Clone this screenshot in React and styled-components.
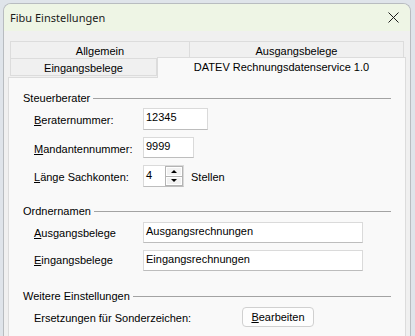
import React from "react";
import styled, { createGlobalStyle } from "styled-components";

const GlobalStyle = createGlobalStyle`
  html, body {
    margin: 0;
    padding: 0;
    height: 336px;
    overflow: hidden;
    background: #dfe4ea;
  }
  #root {
    height: 100%;
  }
`;

const Window = styled.div`
  margin: 3px 0 0 3px;
  width: 408px;
  height: 340px;
  box-sizing: border-box;
  border: 1px solid #b8bcc0;
  border-bottom: none;
  border-radius: 8px 8px 0 0;
  overflow: hidden;
  background: #f0f0f0;
  font-family: "Liberation Sans", Arial, sans-serif;
  font-size: 11px;
  color: #000;
`;

const TitleBar = styled.div`
  height: 26px;
  display: flex;
  align-items: center;
  justify-content: space-between;
  padding: 0 6px 1px 6px;
  background: #eef5e5;
`;

const Title = styled.span`
  font-family: "Noto Sans", "Open Sans", sans-serif;
  font-size: 11px;
  color: #1a1a1a;
`;

const CloseButton = styled.div`
  width: 11px;
  height: 11px;
  margin-right: 5px;
  display: flex;
`;

const TabArea = styled.div`
  padding: 10px 4px 0 4px;
`;

const TabRow = styled.div`
  display: flex;
  margin: ${(p) => (p.$front ? "0" : "0 2px")};
  position: relative;
`;

const Tab = styled.div`
  box-sizing: border-box;
  flex: ${(p) => (p.$width ? `0 0 ${p.$width}px` : "1 1 auto")};
  margin-left: ${(p) => (p.$indent ? "2px" : "0")};
  height: ${(p) => (p.$selected ? "21px" : "18px")};
  margin-top: ${(p) => (p.$selected ? "-2px" : p.$front ? "-1px" : "0")};
  margin-bottom: ${(p) => (p.$selected ? "-1px" : "0")};
  padding-top: 3px;
  line-height: 13px;
  text-align: center;
  background: ${(p) => (p.$selected ? "#f9f9f9" : "#f0f0f0")};
  border: 1px solid #dcdcdc;
  border-bottom: ${(p) => (p.$selected ? "none" : "1px solid #dcdcdc")};
  border-left-width: ${(p) => (p.$joined ? "0" : "1px")};
  position: relative;
  z-index: ${(p) => (p.$selected ? 2 : 1)};
  white-space: nowrap;
`;

const Panel = styled.div`
  box-sizing: border-box;
  height: 300px;
  background: #f9f9f9;
  border: 1px solid #dcdcdc;
  border-bottom: none;
  padding: 14px 14px 0 14px;
  position: relative;
  z-index: 1;
`;

const Group = styled.div`
  margin-top: ${(p) => p.$gap || 0}px;
`;

const GroupHeader = styled.div`
  display: flex;
  align-items: center;
  height: 13px;
  line-height: 13px;
  white-space: nowrap;
`;

const GroupLine = styled.div`
  flex: 1;
  height: 1px;
  margin: -1px 0 0 3px;
  background: #a3a3a3;
`;

const Rows = styled.div`
  display: flex;
  flex-direction: column;
  gap: 7px;
  margin: ${(p) => p.$top}px 0 0 11px;
`;

const Row = styled.div`
  display: flex;
  align-items: flex-start;
`;

const Label = styled.div`
  flex: 0 0 ${(p) => p.$width || 109}px;
  padding-top: ${(p) => p.$offset || 0}px;
  line-height: 13px;
  white-space: nowrap;
`;

const Key = styled.span`
  text-decoration: underline;
  text-underline-offset: 1px;
`;

const TextBox = styled.div`
  box-sizing: border-box;
  width: ${(p) => p.$width}px;
  height: ${(p) => p.$height || 21}px;
  background: #fff;
  border: 1px solid #dadada;
  border-bottom-color: #bdbdbd;
  padding: 0 0 ${(p) => p.$lift || 1}px 2px;
  display: flex;
  align-items: center;
  line-height: 13px;
`;

const SpinBox = styled.div`
  box-sizing: border-box;
  width: 41px;
  height: 22px;
  background: #fff;
  border: 1px solid #dadada;
  border-bottom-color: #bdbdbd;
  display: flex;
`;

const SpinValue = styled.div`
  flex: 1;
  padding: 0 0 2px 2px;
  display: flex;
  align-items: center;
`;

const SpinButtons = styled.div`
  box-sizing: border-box;
  width: 18px;
  border: 1px solid #b4b4b4;
  display: flex;
  flex-direction: column;
  background: #b4b4b4;
  gap: 1px;
`;

const SpinButton = styled.div`
  flex: 1;
  background: #f2f2f2;
  border: 1px solid #fff;
  display: flex;
  align-items: center;
  justify-content: center;
`;

const Arrow = styled.div`
  width: 0;
  height: 0;
  border-left: 3px solid transparent;
  border-right: 3px solid transparent;
  ${(p) =>
    p.$down ? "border-top: 3px solid #000;" : "border-bottom: 3px solid #000;"}
`;

const Unit = styled.div`
  margin-left: 7px;
  padding-top: 6px;
  line-height: 13px;
`;

const Button = styled.div`
  box-sizing: border-box;
  width: 72px;
  height: 20px;
  border: 1px solid #d0d0d0;
  border-radius: 4px;
  background: #fdfdfd;
  display: flex;
  align-items: center;
  justify-content: center;
  padding-bottom: 1px;
`;

export default function App() {
  return (
    <>
      <GlobalStyle />
      <Window>
        <TitleBar>
          <Title>Fibu Einstellungen</Title>
          <CloseButton>
            <svg width="11" height="11" viewBox="0 0 11 11">
              <path d="M0.5 0.5 L10.5 10.5 M10.5 0.5 L0.5 10.5" stroke="#1b1b1b" strokeWidth="1" />
            </svg>
          </CloseButton>
        </TitleBar>
        <TabArea>
          <TabRow>
            <Tab $width={180}>Allgemein</Tab>
            <Tab $joined>Ausgangsbelege</Tab>
          </TabRow>
          <TabRow $front>
            <Tab $front $indent $width={147}>Eingangsbelege</Tab>
            <Tab $front $selected>DATEV Rechnungsdatenservice 1.0</Tab>
          </TabRow>
          <Panel>
            <Group>
              <GroupHeader>
                Steuerberater
                <GroupLine />
              </GroupHeader>
              <Rows $top={3}>
                <Row>
                  <Label $offset={6}><Key>B</Key>eraternummer:</Label>
                  <TextBox $width={65} $height={22} $lift={3}>12345</TextBox>
                </Row>
                <Row>
                  <Label $offset={6}><Key>M</Key>andantennummer:</Label>
                  <TextBox $width={51} $lift={3}>9999</TextBox>
                </Row>
                <Row>
                  <Label $offset={6}><Key>L</Key>änge Sachkonten:</Label>
                  <SpinBox>
                    <SpinValue>4</SpinValue>
                    <SpinButtons>
                      <SpinButton><Arrow /></SpinButton>
                      <SpinButton><Arrow $down /></SpinButton>
                    </SpinButtons>
                  </SpinBox>
                  <Unit>Stellen</Unit>
                </Row>
              </Rows>
            </Group>
            <Group $gap={18}>
              <GroupHeader>
                Ordnernamen
                <GroupLine />
              </GroupHeader>
              <Rows $top={4}>
                <Row>
                  <Label $offset={5}><Key>A</Key>usgangsbelege</Label>
                  <TextBox $width={220} $lift={3}>Ausgangsrechnungen</TextBox>
                </Row>
                <Row>
                  <Label $offset={4}><Key>E</Key>ingangsbelege</Label>
                  <TextBox $width={220} $lift={3}>Eingangsrechnungen</TextBox>
                </Row>
              </Rows>
            </Group>
            <Group $gap={19}>
              <GroupHeader>
                Weitere Einstellungen
                <GroupLine />
              </GroupHeader>
              <Rows $top={4}>
                <Row>
                  <Label $width={208} $offset={5}>Ersetzungen für Sonderzeichen:</Label>
                  <Button><span><Key>B</Key>earbeiten</span></Button>
                </Row>
              </Rows>
            </Group>
          </Panel>
        </TabArea>
      </Window>
    </>
  );
}
